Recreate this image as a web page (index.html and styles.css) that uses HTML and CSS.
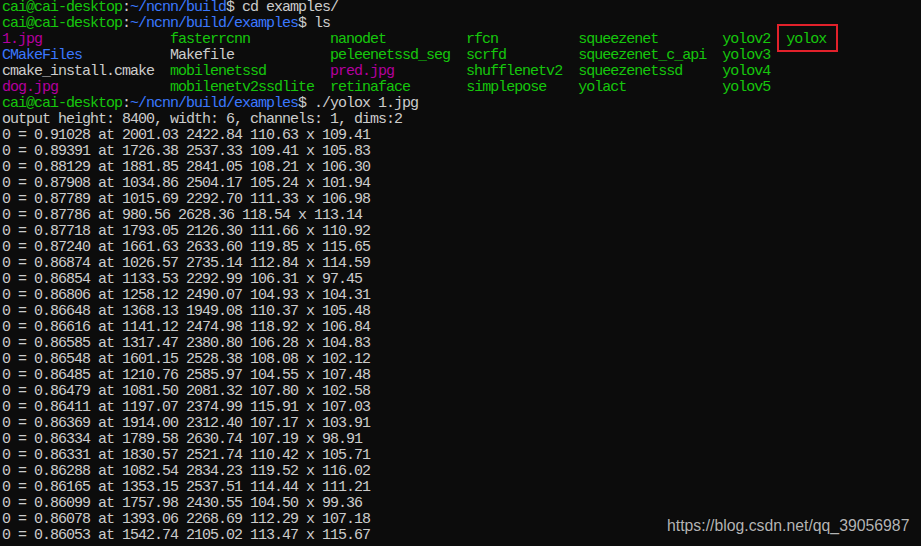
FILE: index.html
```html
<!DOCTYPE html>
<html lang="en">
<head>
<meta charset="utf-8">
<title>Terminal</title>
<link rel="stylesheet" href="styles.css">
</head>
<body>
<main class="term">
<pre class="out"><span class="g">cai@cai-desktop</span>:<span class="b">~/ncnn/build</span>$ cd examples/
<span class="g">cai@cai-desktop</span>:<span class="b">~/ncnn/build/examples</span>$ ls
<span class="m">1.jpg</span>                <span class="g">fasterrcnn</span>          <span class="g">nanodet</span>          <span class="g">rfcn</span>          <span class="g">squeezenet</span>        <span class="g">yolov2</span>  <span class="g">yolox</span>
<span class="b">CMakeFiles</span>           Makefile            <span class="g">peleenetssd_seg</span>  <span class="g">scrfd</span>         <span class="g">squeezenet_c_api</span>  <span class="g">yolov3</span>
cmake_install.cmake  <span class="g">mobilenetssd</span>        <span class="m">pred.jpg</span>         <span class="g">shufflenetv2</span>  <span class="g">squeezenetssd</span>     <span class="g">yolov4</span>
<span class="m">dog.jpg</span>              <span class="g">mobilenetv2ssdlite</span>  <span class="g">retinaface</span>       <span class="g">simplepose</span>    <span class="g">yolact</span>            <span class="g">yolov5</span>
<span class="g">cai@cai-desktop</span>:<span class="b">~/ncnn/build/examples</span>$ ./yolox 1.jpg
output height: 8400, width: 6, channels: 1, dims:2
0 = 0.91028 at 2001.03 2422.84 110.63 x 109.41
0 = 0.89391 at 1726.38 2537.33 109.41 x 105.83
0 = 0.88129 at 1881.85 2841.05 108.21 x 106.30
0 = 0.87908 at 1034.86 2504.17 105.24 x 101.94
0 = 0.87789 at 1015.69 2292.70 111.33 x 106.98
0 = 0.87786 at 980.56 2628.36 118.54 x 113.14
0 = 0.87718 at 1793.05 2126.30 111.66 x 110.92
0 = 0.87240 at 1661.63 2633.60 119.85 x 115.65
0 = 0.86874 at 1026.57 2735.14 112.84 x 114.59
0 = 0.86854 at 1133.53 2292.99 106.31 x 97.45
0 = 0.86806 at 1258.12 2490.07 104.93 x 104.31
0 = 0.86648 at 1368.13 1949.08 110.37 x 105.48
0 = 0.86616 at 1141.12 2474.98 118.92 x 106.84
0 = 0.86585 at 1317.47 2380.80 106.28 x 104.83
0 = 0.86548 at 1601.15 2528.38 108.08 x 102.12
0 = 0.86485 at 1210.76 2585.97 104.55 x 107.48
0 = 0.86479 at 1081.50 2081.32 107.80 x 102.58
0 = 0.86411 at 1197.07 2374.99 115.91 x 107.03
0 = 0.86369 at 1914.00 2312.40 107.17 x 103.91
0 = 0.86334 at 1789.58 2630.74 107.19 x 98.91
0 = 0.86331 at 1830.57 2521.74 110.42 x 105.71
0 = 0.86288 at 1082.54 2834.23 119.52 x 116.02
0 = 0.86165 at 1353.15 2537.51 114.44 x 111.21
0 = 0.86099 at 1757.98 2430.55 104.50 x 99.36
0 = 0.86078 at 1393.06 2268.69 112.29 x 107.18
0 = 0.86053 at 1542.74 2105.02 113.47 x 115.67</pre>
<div class="mark" aria-hidden="true"></div>
<div class="watermark">https://blog.csdn.net/qq_39056987</div>
</main>
</body>
</html>
```
FILE: styles.css
```css
html, body {
  margin: 0;
  padding: 0;
  background: #0c0c0c;
  overflow: hidden;
}
.term {
  position: relative;
  width: 921px;
  height: 546px;
  background: #0c0c0c;
  overflow: hidden;
}
.out {
  margin: 0;
  padding: 0 0 0 2px;
  font-family: "Liberation Mono", "DejaVu Sans Mono", monospace;
  font-size: 15px;
  letter-spacing: -1px;
  line-height: 16px;
  color: #cccccc;
  white-space: pre;
}
.g { color: #16c60c; }
.b { color: #3b78ff; }
.m { color: #b4009e; }
.mark {
  position: absolute;
  left: 777px;
  top: 24px;
  width: 57px;
  height: 24px;
  border: 2px solid #e3212b;
}
.watermark {
  position: absolute;
  left: 667px;
  top: 516px;
  font-family: "Liberation Sans", Arial, sans-serif;
  font-size: 15.8px;
  line-height: 19px;
  color: #b4b4b4;
  text-shadow: 0 0 1px #000;
}
```
